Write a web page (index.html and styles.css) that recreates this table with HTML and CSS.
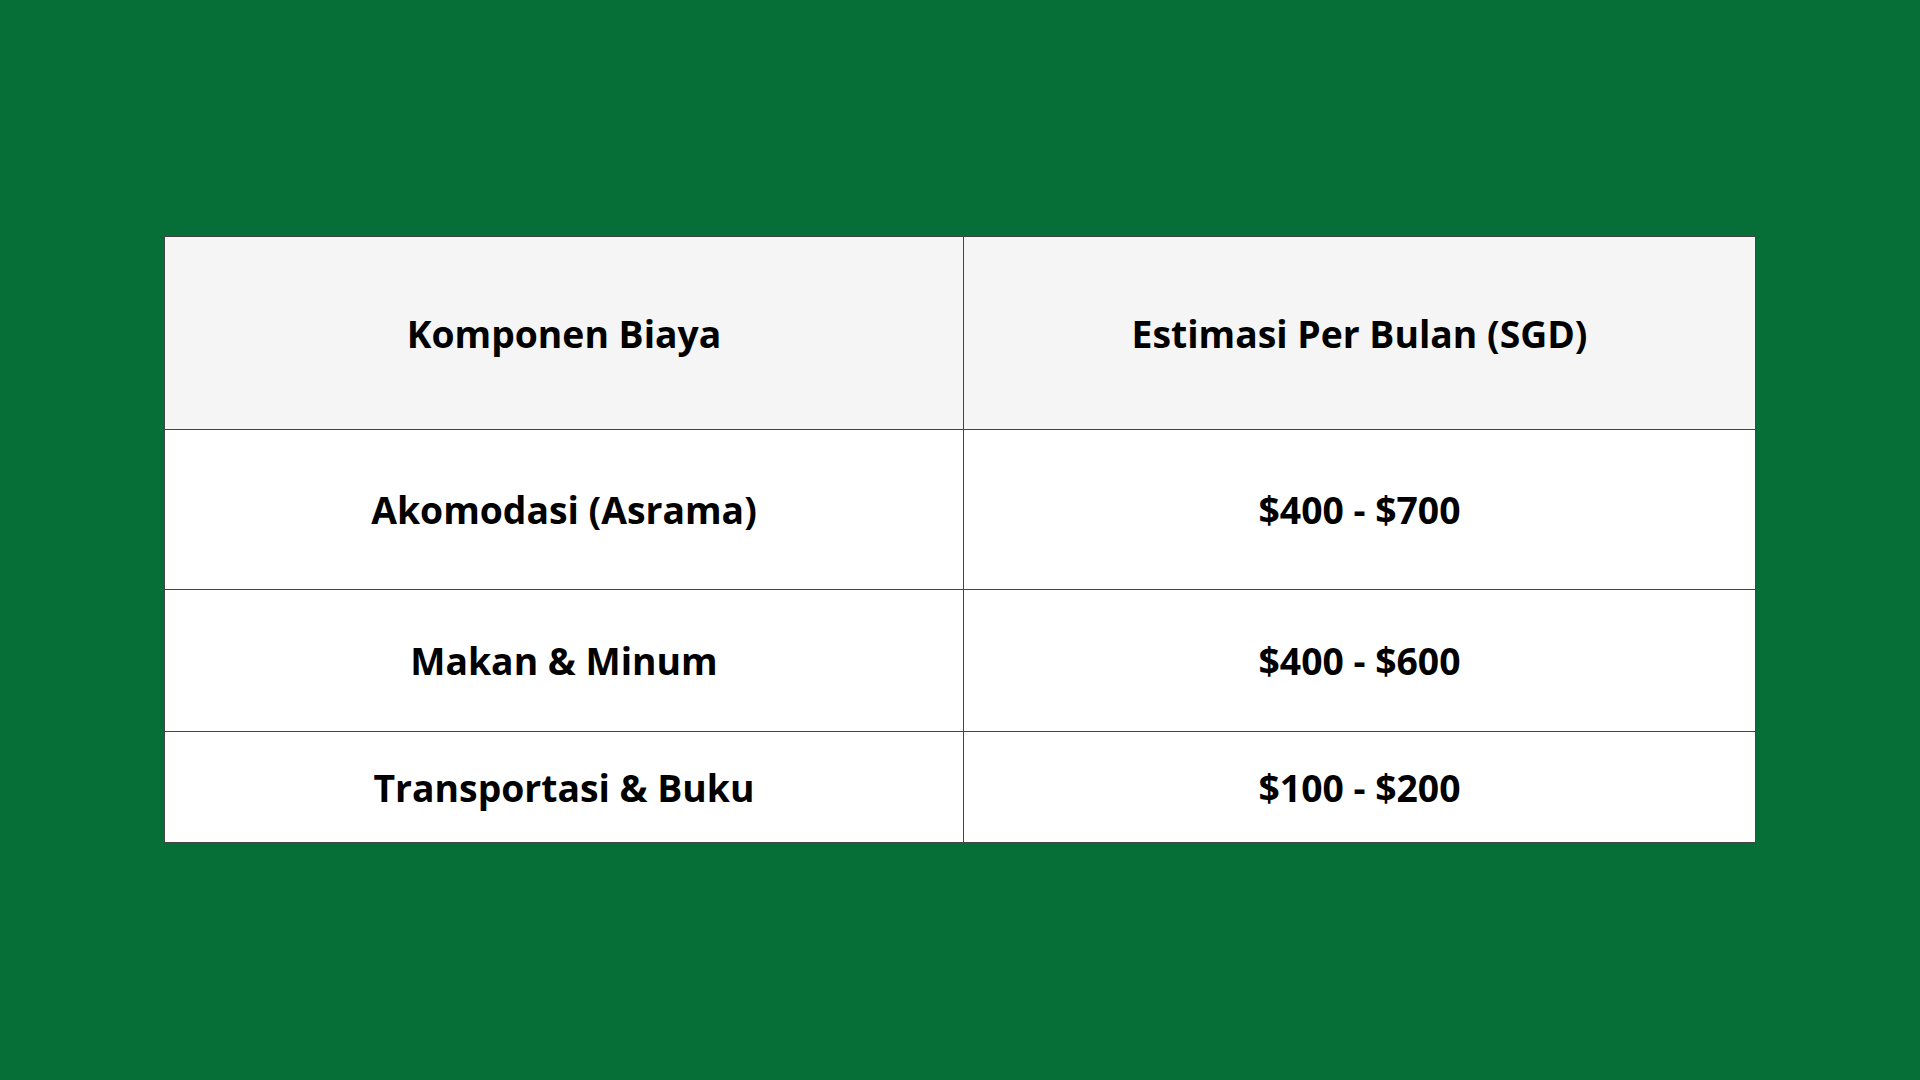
FILE: index.html
```html
<!DOCTYPE html>
<html lang="id">
<head>
<meta charset="utf-8">
<title>Biaya Hidup</title>
<link rel="stylesheet" href="styles.css">
</head>
<body>
<main class="page">
  <table class="cost-table">
    <thead>
      <tr class="row-head">
        <th>Komponen Biaya</th>
        <th>Estimasi Per Bulan (SGD)</th>
      </tr>
    </thead>
    <tbody>
      <tr class="row-a">
        <td>Akomodasi (Asrama)</td>
        <td>$400 - $700</td>
      </tr>
      <tr class="row-b">
        <td>Makan &amp; Minum</td>
        <td>$400 - $600</td>
      </tr>
      <tr class="row-c">
        <td>Transportasi &amp; Buku</td>
        <td>$100 - $200</td>
      </tr>
    </tbody>
  </table>
</main>
</body>
</html>
```

FILE: styles.css
```css
html, body {
  margin: 0;
  padding: 0;
}
body {
  background: #066f37;
  width: 1920px;
  height: 1080px;
  overflow: hidden;
  font-family: "Open Sans", "Noto Sans", sans-serif;
}
.page {
  display: flex;
  justify-content: center;
  padding-top: 236px;
}
.cost-table {
  width: 1592px;
  border-collapse: collapse;
  table-layout: fixed;
  border: 1px solid #1f3a2a;
}
.cost-table th,
.cost-table td {
  border: 1px solid #444;
  text-align: center;
  vertical-align: middle;
  font-weight: 700;
  font-size: 37.3px;
  color: #000;
  padding: 0;
}
.cost-table th:first-child,
.cost-table td:first-child {
  width: 798px;
}
.cost-table th {
  background: #f5f5f5;
  height: 192px;
}
.cost-table td {
  background: #fff;
}
.row-a td { height: 159px; }
.row-b td { height: 141px; }
.row-c td { height: 110px; }
```
